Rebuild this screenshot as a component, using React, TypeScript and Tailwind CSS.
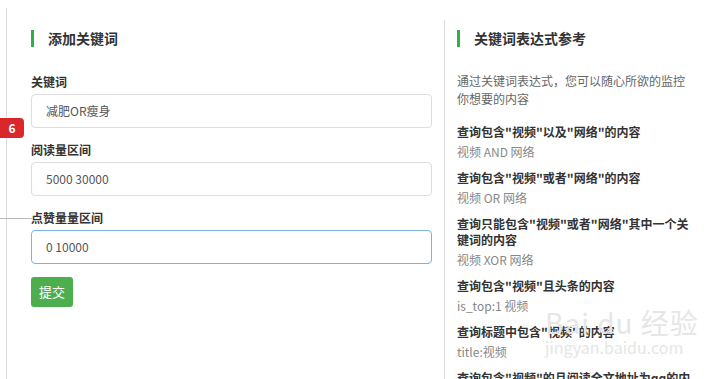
const fields = [
  { label: "关键词", value: "减肥OR瘦身", focus: false },
  { label: "阅读量区间", value: "5000 30000", focus: false },
  { label: "点赞量量区间", value: "0 10000", focus: true },
];

const examples = [
  { q: "查询包含\"视频\"以及\"网络\"的内容", a: "视频 AND 网络" },
  { q: "查询包含\"视频\"或者\"网络\"的内容", a: "视频 OR 网络" },
  { q: "查询只能包含\"视频\"或者\"网络\"其中一个关键词的内容", a: "视频 XOR 网络" },
  { q: "查询包含\"视频\"且头条的内容", a: "is_top:1 视频" },
  { q: "查询标题中包含\"视频\"的内容", a: "title:视频" },
  { q: "查询包含\"视频\"的且阅读全文地址为qq的内容", a: "url:qq.com 视频" },
];

function SectionTitle({ text }: { text: string }) {
  return (
    <div className="flex items-center h-[17px]">
      <span className="w-[3px] h-[17px] bg-[#2bb24c]" />
      <span className="ml-[14px] text-[14px] font-bold text-[#333] leading-[17px]">{text}</span>
    </div>
  );
}

export default function App() {
  return (
    <div className="relative w-[708px] h-[379px] overflow-hidden bg-white font-['Noto_Sans_CJK_SC',sans-serif] text-[12px]">
      <div className="flex h-full">
        {/* 左侧表单 */}
        <div className="ml-[6px] mt-[8px] w-[438px] border-l border-[#ddd] pl-[24px] pr-[12px] pt-[22px]">
          <SectionTitle text="添加关键词" />
          <div className="mt-[26px]">
            {fields.map((f) => (
              <div key={f.label} className="mb-[13px]">
                <div className="mb-[4px] leading-[17px] font-bold text-[#333]">{f.label}</div>
                <div
                  className={`h-[34px] rounded-[4px] border px-[14px] flex items-center text-[#555] ${
                    f.focus ? "border-[#7eb4e0]" : "border-[#ddd]"
                  }`}
                >
                  {f.value}
                </div>
              </div>
            ))}
            <button className="w-[42px] h-[30px] rounded-[3px] bg-[#4cae4c] text-white text-[13px] leading-[30px]">
              提交
            </button>
          </div>
        </div>

        {/* 右侧参考 */}
        <div className="mt-[20px] flex-1 border-l border-[#ddd] pl-[12px] pr-[12px] pt-[10px]">
          <SectionTitle text="关键词表达式参考" />
          <p className="mt-[25px] leading-[18px] text-[#666]">
            通过关键词表达式，您可以随心所欲的监控你想要的内容
          </p>
          <div className="mt-[16px]">
            {examples.map((e) => (
              <div key={e.q} className="mb-[8px]">
                <div className="font-bold text-[#333] leading-[16px]">{e.q}</div>
                <div className="mt-[2px] leading-[20px] text-[#888]">{e.a}</div>
              </div>
            ))}
          </div>
        </div>
      </div>

      {/* 标注 */}
      <div className="absolute left-0 top-[118px] w-[24px] h-[20px] rounded-r-[4px] bg-[#d9272b] text-white font-bold text-[12px] leading-[20px] text-center">
        6
      </div>
      <div className="absolute left-0 top-[218px] w-[32px] h-px bg-[#bbb]" />

      {/* 水印 */}
      <div className="absolute left-[545px] top-[306px] whitespace-nowrap text-[#e6e6e6] pointer-events-none">
        <div className="text-[28px] leading-[32px] tracking-[1px]">Bai du 经验</div>
        <div className="text-[16px] leading-[18px]">jingyan.baidu.com</div>
      </div>
    </div>
  );
}
